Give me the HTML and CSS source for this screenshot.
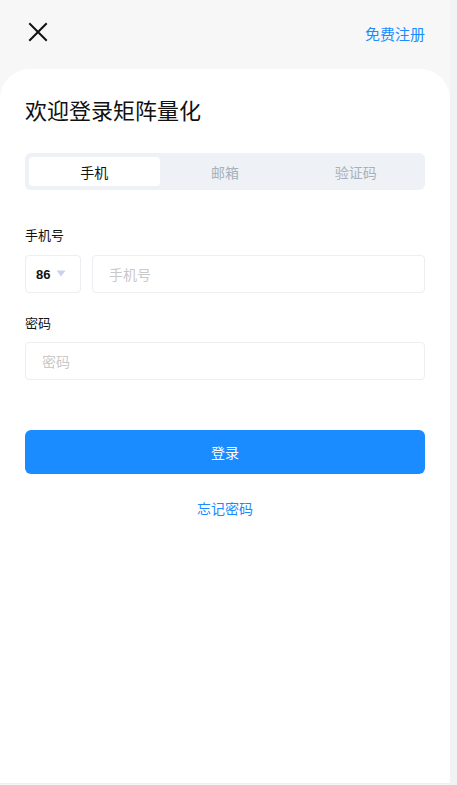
FILE: index.html
```html
<!DOCTYPE html>
<html lang="zh-CN">
<head>
<meta charset="utf-8">
<title>登录</title>
<link rel="stylesheet" href="styles.css">
</head>
<body>
<div class="shell">
  <div class="page">
    <header class="topbar">
      <button class="close" aria-label="关闭">
        <svg width="20" height="20" viewBox="0 0 20 20"><path d="M2 2 L18 18 M18 2 L2 18" stroke="#111" stroke-width="2" stroke-linecap="square" fill="none"/></svg>
      </button>
      <a class="register" href="#">免费注册</a>
    </header>
    <main class="card">
      <h1 class="title">欢迎登录矩阵量化</h1>
      <div class="tabs">
        <div class="tab active">手机</div>
        <div class="tab">邮箱</div>
        <div class="tab">验证码</div>
      </div>
      <div class="label first">手机号</div>
      <div class="phone-row">
        <div class="country">
          <span class="code">86</span>
          <svg class="caret" width="10" height="7" viewBox="0 0 10 7"><path d="M0.5 0.5 H9.5 L5 6.5 Z" fill="#cdd1ec"/></svg>
        </div>
        <div class="field grow"><span class="ph">手机号</span></div>
      </div>
      <div class="label">密码</div>
      <div class="field pw"><span class="ph">密码</span></div>
      <button class="submit">登录</button>
      <a class="forgot" href="#">忘记密码</a>
    </main>
  </div>
  <div class="gutter"></div>
</div>
</body>
</html>
```
FILE: styles.css
```css
* { box-sizing: border-box; }
html, body { margin: 0; padding: 0; }
body {
  font-family: "Noto Sans CJK SC", "Noto Sans", "Liberation Sans", sans-serif;
  background: #f7f7f7;
  color: #111;
}
.shell {
  display: flex;
  width: 457px;
  height: 785px;
  overflow: hidden;
}
.page {
  width: 450px;
  display: flex;
  flex-direction: column;
  background: #f7f7f7;
}
.gutter {
  flex: 1;
  background: #f1f2f4;
}
.topbar {
  height: 69px;
  display: flex;
  align-items: center;
  justify-content: space-between;
  padding: 0 25px 0 28px;
}
.close {
  border: 0;
  background: none;
  padding: 0;
  width: 20px;
  height: 20px;
  margin-top: -6px;
  display: flex;
}
.register {
  color: #1a8cff;
  font-size: 15px;
  text-decoration: none;
  line-height: 20px;
  margin-top: -1px;
}
.card {
  height: 715px;
  background: #fff;
  border-radius: 30px 30px 0 0;
  padding: 25px 25px 0;
  display: flex;
  flex-direction: column;
  border-bottom: 1px solid #eeeeee;
}
.title {
  margin: 0;
  font-size: 22px;
  font-weight: 400;
  line-height: 30px;
  color: #111;
}
.tabs {
  margin-top: 29px;
  height: 37px;
  padding: 4px;
  background: #eef1f5;
  border-radius: 6px;
  display: grid;
  grid-template-columns: repeat(3, 1fr);
}
.tab {
  display: flex;
  align-items: center;
  justify-content: center;
  font-size: 14px;
  color: #a8b1bb;
  border-radius: 4px;
}
.tab.active {
  background: #fff;
  color: #111;
}
.label {
  margin-top: 20px;
  font-size: 13px;
  line-height: 20px;
  color: #111;
}
.label.first { margin-top: 35px; }
.phone-row {
  margin-top: 10px;
  display: flex;
  gap: 11px;
}
.country {
  width: 56px;
  height: 38px;
  border: 1px solid #eceef2;
  border-radius: 4px;
  display: flex;
  align-items: center;
  padding-left: 10px;
  gap: 6px;
}
.code {
  font-family: "Liberation Sans", sans-serif;
  font-weight: 700;
  font-size: 13px;
  color: #111;
}
.caret { margin-top: -2px; }
.field {
  height: 38px;
  border: 1px solid #eceef2;
  border-radius: 4px;
  display: flex;
  align-items: center;
  padding-left: 16px;
}
.field.grow { flex: 1; }
.field.pw { margin-top: 9px; }
.ph {
  font-size: 14px;
  color: #c9c9c9;
}
.submit {
  margin-top: 50px;
  height: 44px;
  border: 0;
  border-radius: 6px;
  background: #1a8cff;
  color: #fff;
  font-family: inherit;
  font-size: 14px;
}
.forgot {
  margin-top: 24px;
  text-align: center;
  color: #1a8cff;
  font-size: 14px;
  line-height: 20px;
  text-decoration: none;
}
```
